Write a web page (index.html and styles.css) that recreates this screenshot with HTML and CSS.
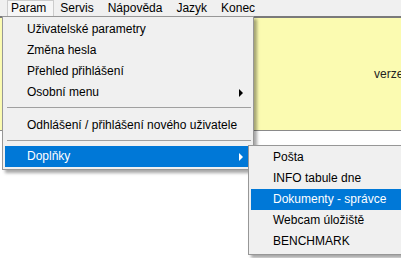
FILE: index.html
```html
<!DOCTYPE html>
<html lang="cs">
<head>
    <meta charset="UTF-8">
    <title>Menu</title>
    <link rel="stylesheet" href="styles.css">
</head>
<body>
    <!-- Horní lišta menu -->
    <div class="menubar">
        <span class="top-item open">Param</span>
        <span class="top-item">Servis</span>
        <span class="top-item">Nápověda</span>
        <span class="top-item">Jazyk</span>
        <span class="top-item">Konec</span>
    </div>

    <!-- Žlutý panel pod menu -->
    <div class="panel">
        <span class="version">verze</span>
    </div>

    <!-- Rozbalené menu Param -->
    <div class="dropdown main-menu">
        <div class="item">Uživatelské parametry</div>
        <div class="item">Změna hesla</div>
        <div class="item">Přehled přihlášení</div>
        <div class="item sub">Osobní menu</div>
        <div class="separator first"></div>
        <div class="item">Odhlášení / přihlášení nového uživatele</div>
        <div class="separator"></div>
        <div class="item sub active">Doplňky</div>
    </div>

    <!-- Podmenu Doplňky -->
    <div class="dropdown sub-menu">
        <div class="item">Pošta</div>
        <div class="item">INFO tabule dne</div>
        <div class="item active">Dokumenty - správce</div>
        <div class="item">Webcam úložiště</div>
        <div class="item">BENCHMARK</div>
    </div>
</body>
</html>
```

FILE: styles.css
```css
/* Základ stránky */
body {
    margin: 0;
    font-family: "Liberation Sans", Arial, sans-serif;
    font-size: 12px;
    color: #000;
    background-color: #fff;
    overflow: hidden;
}

/* Lišta menu */
.menubar {
    display: flex;
    height: 16px;
    background-color: #f0f0f0;
    padding-left: 7px;
}

.top-item {
    padding: 0 7px 0 3px;
    margin-right: 2px;
    line-height: 15px;
    border: 1px solid transparent;
    border-bottom: none;
}

.top-item.open {
    background-color: #f6f6f6;
    border-color: #cccccc;
}

/* Žlutý panel */
.panel {
    height: 112px;
    background-color: #fbfbb1;
    border-top: 2px solid #7a7a7a;
    border-bottom: 1px solid #8a8a8a;
    position: relative;
}

.version {
    position: absolute;
    left: 374px;
    top: 49px;
    color: #222;
}

/* Rozbalovací menu */
.dropdown {
    position: absolute;
    background-color: #f0f0f0;
    border: 1px solid #979797;
    box-shadow: 3px 3px 3px rgba(0, 0, 0, 0.35);
    padding: 2px;
}

.main-menu {
    left: 2px;
    top: 16px;
    width: 246px;
}

.sub-menu {
    left: 248px;
    top: 145px;
    width: 160px;
    padding-top: 1px;
}

.item {
    position: relative;
    height: 21px;
    line-height: 21px;
    padding-left: 22px;
    white-space: nowrap;
}

.item.active {
    background-color: #0078d7;
    color: #fff;
}

/* Šipka podmenu */
.item.sub::after {
    content: "";
    position: absolute;
    right: 8px;
    top: 7px;
    border-left: 4px solid #000;
    border-top: 4px solid transparent;
    border-bottom: 4px solid transparent;
}

.item.sub.active::after {
    border-left-color: #fff;
}

.separator {
    height: 1px;
    background-color: #a0a0a0;
    margin: 4px 0 5px 2px;
}

.separator.first {
    margin-bottom: 7px;
}
```
